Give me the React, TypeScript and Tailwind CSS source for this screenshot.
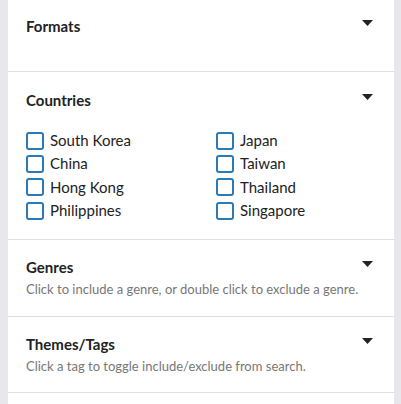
import React from "react";

const Caret = () => (
  <svg width="11" height="6" viewBox="0 0 11 6" className="mt-[4px] shrink-0">
    <polygon points="0,0 11,0 5.5,6" fill="#222" />
  </svg>
);

const Box = ({ label }: { label: string }) => (
  <label className="flex items-center h-[23.33px] gap-[6px] cursor-pointer">
    <span className="w-[18px] h-[18px] rounded-[3px] border-2 border-[#2a7ab8] bg-white shrink-0" />
    <span className="text-[15px] text-[#222] leading-none">{label}</span>
  </label>
);

const Header = ({ title, desc }: { title: string; desc?: string }) => (
  <div className="flex justify-between items-start">
    <div>
      <div className="text-[15px] font-bold text-[#222] leading-[20px]">{title}</div>
      {desc && <div className="text-[13px] text-[#777] leading-[20px] mt-[2px]">{desc}</div>}
    </div>
    <Caret />
  </div>
);

export default function App() {
  const left = ["South Korea", "China", "Hong Kong", "Philippines"];
  const right = ["Japan", "Taiwan", "Thailand", "Singapore"];
  return (
    <div className="w-[401px] h-[404px] bg-[#e8e8ec] px-[8px] overflow-hidden" style={{ fontFamily: "Lato, 'Noto Sans', sans-serif" }}>
      <div className="bg-white h-full w-[386px]">
        <section className="h-[72px] pl-[18px] pr-[21px] pt-[16px] border-b border-[#dedede]">
          <Header title="Formats" />
        </section>
        <section className="h-[168px] pl-[18px] pr-[21px] pt-[18px] border-b border-[#dedede]">
          <Header title="Countries" />
          <div className="grid grid-cols-[190px_1fr] mt-[19px]">
            <div>
              {left.map((l) => <Box key={l} label={l} />)}
            </div>
            <div>
              {right.map((l) => <Box key={l} label={l} />)}
            </div>
          </div>
        </section>
        <section className="h-[77px] pl-[18px] pr-[21px] pt-[17px] border-b border-[#dedede]">
          <Header title="Genres" desc="Click to include a genre, or double click to exclude a genre." />
        </section>
        <section className="h-[76px] pl-[18px] pr-[21px] pt-[17px] border-b border-[#dedede]">
          <Header title="Themes/Tags" desc="Click a tag to toggle include/exclude from search." />
        </section>
      </div>
    </div>
  );
}
